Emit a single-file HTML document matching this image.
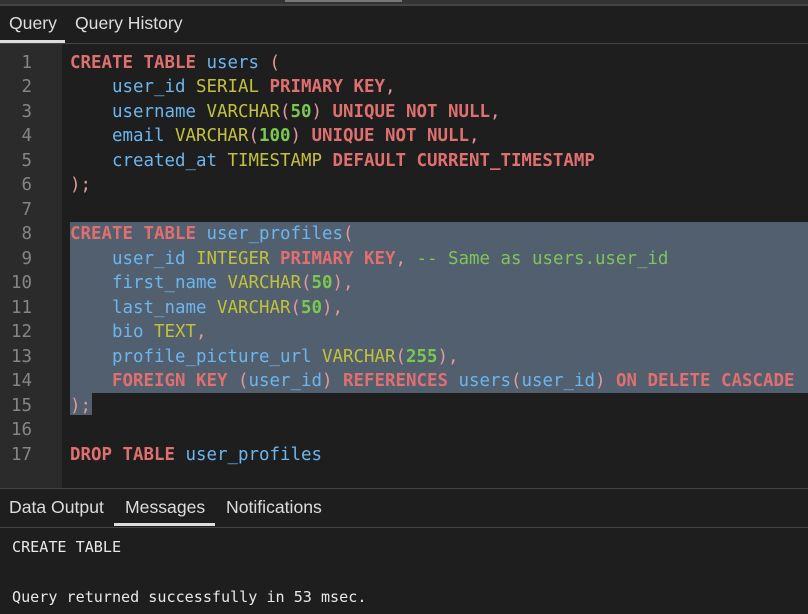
<!DOCTYPE html>
<html><head><style>
*{margin:0;padding:0;box-sizing:border-box}
body{width:808px;height:614px;background:#1e1e1e;overflow:hidden;position:relative;font-family:"Liberation Sans",sans-serif}
.top{position:absolute;left:0;top:0;width:808px;height:4px;background:#333}
.top2{position:absolute;left:0;top:4px;width:808px;height:2px;background:#444}
.sb{position:absolute;left:285px;top:0;width:117px;height:2px;background:#777}
.tab{position:absolute;color:#ddd;font-size:17.6px}
.line{position:absolute;left:0;width:808px;height:1px;background:#444}
.gutter{position:absolute;left:0;top:44px;width:62px;height:444px;background:#2b2b2b}
.code{position:absolute;left:0;top:1.5px;font-family:"DejaVu Sans Mono",monospace;font-size:17.45px}
.ln{position:absolute;left:0;width:32px;text-align:right;color:#858585;height:24.5px;line-height:24.5px}
.cl{position:absolute;left:70px;white-space:pre;height:24.5px;line-height:24.5px;color:#6cb6f0}
.k{color:#e0706f;font-weight:bold}.t{color:#c2c23a}.n{color:#7cc84f;font-weight:bold}.p{color:#e19a9a}.c{color:#7fc55a}
.sel{position:absolute;background:#515f6e}
.msg{position:absolute;left:12px;font-family:"DejaVu Sans Mono",monospace;font-size:15.1px;color:#e8e8e8}
</style></head><body>
<div class="top"></div><div class="top2"></div><div class="sb"></div>
<div class="tab" style="left:9px;top:13px">Query</div>
<div class="tab" style="left:75px;top:13px">Query History</div>
<div style="position:absolute;left:0;top:40px;width:65px;height:3px;background:#ddd"></div>
<div class="line" style="top:43px"></div>
<div class="gutter"></div>
<div class="sel" style="left:70px;top:222px;width:738px;height:171px"></div>
<div class="sel" style="left:70px;top:393px;width:22px;height:22px"></div>
<div class="code">
<div class="ln" style="top:49px">1</div><div class="ln" style="top:73.5px">2</div><div class="ln" style="top:98px">3</div><div class="ln" style="top:122.5px">4</div><div class="ln" style="top:147px">5</div><div class="ln" style="top:171.5px">6</div><div class="ln" style="top:196px">7</div><div class="ln" style="top:220.5px">8</div><div class="ln" style="top:245px">9</div><div class="ln" style="top:269.5px">10</div><div class="ln" style="top:294px">11</div><div class="ln" style="top:318.5px">12</div><div class="ln" style="top:343px">13</div><div class="ln" style="top:367.5px">14</div><div class="ln" style="top:392px">15</div><div class="ln" style="top:416.5px">16</div><div class="ln" style="top:441px">17</div>
<div class="cl" style="top:49px"><span class="k">CREATE TABLE</span> users <span class="p">(</span></div>
<div class="cl" style="top:73.5px">    user_id <span class="t">SERIAL</span> <span class="k">PRIMARY KEY</span><span class="p">,</span></div>
<div class="cl" style="top:98px">    username <span class="t">VARCHAR</span><span class="p">(</span><span class="n">50</span><span class="p">)</span> <span class="k">UNIQUE NOT NULL</span><span class="p">,</span></div>
<div class="cl" style="top:122.5px">    email <span class="t">VARCHAR</span><span class="p">(</span><span class="n">100</span><span class="p">)</span> <span class="k">UNIQUE NOT NULL</span><span class="p">,</span></div>
<div class="cl" style="top:147px">    created_at <span class="t">TIMESTAMP</span> <span class="k">DEFAULT CURRENT_TIMESTAMP</span></div>
<div class="cl" style="top:171.5px"><span class="p">);</span></div>
<div class="cl" style="top:220.5px"><span class="k">CREATE TABLE</span> user_profiles<span class="p">(</span></div>
<div class="cl" style="top:245px">    user_id <span class="t">INTEGER</span> <span class="k">PRIMARY KEY</span><span class="p">,</span> <span class="c">-- Same as users.user_id</span></div>
<div class="cl" style="top:269.5px">    first_name <span class="t">VARCHAR</span><span class="p">(</span><span class="n">50</span><span class="p">),</span></div>
<div class="cl" style="top:294px">    last_name <span class="t">VARCHAR</span><span class="p">(</span><span class="n">50</span><span class="p">),</span></div>
<div class="cl" style="top:318.5px">    bio <span class="t">TEXT</span><span class="p">,</span></div>
<div class="cl" style="top:343px">    profile_picture_url <span class="t">VARCHAR</span><span class="p">(</span><span class="n">255</span><span class="p">),</span></div>
<div class="cl" style="top:367.5px">    <span class="k">FOREIGN KEY</span> <span class="p">(</span>user_id<span class="p">)</span> <span class="k">REFERENCES</span> users<span class="p">(</span>user_id<span class="p">)</span> <span class="k">ON DELETE CASCADE</span></div>
<div class="cl" style="top:392px"><span class="p">);</span></div>
<div class="cl" style="top:441px"><span class="k">DROP TABLE</span> user_profiles</div>
</div>
<div class="line" style="top:488px"></div>
<div class="tab" style="left:9px;top:497px">Data Output</div>
<div class="tab" style="left:125px;top:497px">Messages</div>
<div class="tab" style="left:226px;top:497px">Notifications</div>
<div style="position:absolute;left:114px;top:523px;width:101px;height:3px;background:#ddd"></div>
<div class="line" style="top:527px"></div>
<div class="msg" style="top:538px">CREATE TABLE</div>
<div class="msg" style="top:588px">Query returned successfully in 53 msec.</div>
</body></html>
